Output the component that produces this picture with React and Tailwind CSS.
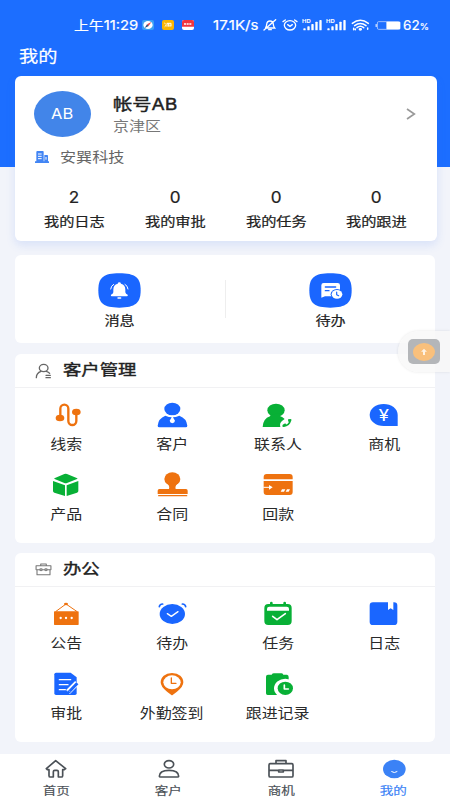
import React from "react";
import clsx from "clsx";

const ORANGE = "#ee720f";
const BLUE = "#1a66ff";
const GREEN = "#08b036";

// Labels use a slightly widened face
const Txt = ({ className, children }) => (
  <span className={clsx("block whitespace-nowrap", className)}>{children}</span>
);

const Glyph = ({ children }) => (
  <svg viewBox="0 0 96 84" className="w-8 h-7" fill="none" strokeLinecap="round" strokeLinejoin="round">
    {children}
  </svg>
);

/* ---------- Customer icons ---------- */

const ClueIcon = () => (
  <Glyph>
    <path d="M31 50V23a12 12 0 0 1 24 0V60a12 12 0 0 0 24 0V33" stroke={ORANGE} strokeWidth="7" />
    <ellipse cx="30" cy="51" rx="13" ry="10" fill={ORANGE} />
    <ellipse cx="79" cy="33" rx="13" ry="10" fill={ORANGE} />
  </Glyph>
);

const CustomerIcon = () => (
  <Glyph>
    <ellipse cx="49" cy="24" rx="24" ry="19" fill={BLUE} />
    <path d="M28 44Q49 53 70 44Q92 52 94 74Q94 79 89 79H10Q5 79 5 74Q7 52 28 44Z" fill={BLUE} />
    <path d="M49 42Q51 51 57 59Q56 66 49 67Q42 66 41 59Q47 51 49 42Z" fill="#fff" />
  </Glyph>
);

const ContactIcon = () => (
  <Glyph>
    <ellipse cx="42" cy="28" rx="26" ry="20" fill={GREEN} />
    <path d="M27 40L24 46Q3 53 2 78H55Q52 66 60 60L68 54Q62 48 54 45V38Z" fill={GREEN} />
    <path d="M64 75Q83 74 85 57" stroke={GREEN} strokeWidth="5" />
    <path d="M62 71L70 67L74 74L65 78Q60 78 62 71ZM79 54L88 55Q90 61 83 64L78 61Z" fill={GREEN} />
  </Glyph>
);

const ChanceIcon = () => (
  <Glyph>
    <path d="M47 9C70 9 89 23 89 42V75H47C24 75 5 61 5 42S24 9 47 9Z" fill={BLUE} />
    <text x="47" y="60" textAnchor="middle" fontSize="50" fill="#fff" fontFamily="Roboto, sans-serif" transform="translate(-7 0) scale(1.15 1)">¥</text>
  </Glyph>
);

const ProductIcon = () => (
  <Glyph>
    <path d="M15 21L43 9Q47 7 51 9L80 21L83 23L51 36Q47 38 43 36L12 23Z" fill={GREEN} />
    <path d="M9 30L45 43V75L13 65Q9 64 9 60ZM85 30L50 43V75L81 65Q85 64 85 60Z" fill={GREEN} />
  </Glyph>
);

const ContractIcon = () => (
  <Glyph>
    <ellipse cx="49" cy="24" rx="24" ry="20" fill={ORANGE} />
    <path d="M33 37Q42 45 39 54H10Q5 54 5 59V69H95V59Q95 54 90 54H59Q56 45 66 37Z" fill={ORANGE} />
    <path d="M8 74H92" stroke={ORANGE} strokeWidth="4" />
  </Glyph>
);

const PaymentIcon = () => (
  <Glyph>
    <path d="M14 9H83Q92 9 92 18V25H5V18Q5 9 14 9ZM5 30H92V63Q92 72 83 72H14Q5 72 5 63Z" fill={ORANGE} />
    <path d="M4 49H28" stroke="#fff" strokeWidth="3" strokeLinecap="butt" />
    <path d="M21 42L32 49L21 56Z" fill="#fff" />
    <path d="M60 55H70L66 62H56ZM75 55H84L80 62H71Z" fill="#fff" />
  </Glyph>
);

/* ---------- Office icons ---------- */

const NoticeIcon = () => (
  <Glyph>
    <path d="M18 34L48 12L80 34" stroke={ORANGE} strokeWidth="3" />
    <ellipse cx="48" cy="12" rx="6" ry="4" fill={ORANGE} />
    <rect x="12" y="34" width="74" height="41" rx="2" fill={ORANGE} />
    <path d="M32 54h.1M48 54h.1M65 54h.1" stroke="#fff" strokeWidth="7" />
  </Glyph>
);

const AlarmIcon = () => (
  <Glyph>
    <ellipse cx="49" cy="42" rx="38" ry="30" fill={BLUE} />
    <path d="M10 20Q11 13 20 12M89 20Q88 13 79 12" stroke={BLUE} strokeWidth="5" />
    <path d="M34 41L46 49L66 35" stroke="#fff" strokeWidth="4" />
  </Glyph>
);

const TaskIcon = () => (
  <Glyph>
    <rect x="7" y="12" width="82" height="63" rx="12" fill={GREEN} />
    <path d="M28 9V15M68 9V15" stroke={GREEN} strokeWidth="8" />
    <path d="M15 32V26Q15 20 22 20H74Q81 20 81 26V32Z" fill="#fff" />
    <path d="M32 49L45 59L70 41" stroke="#fff" strokeWidth="5" />
  </Glyph>
);

const DiaryIcon = () => (
  <Glyph>
    <rect x="5" y="7" width="83" height="68" rx="10" fill={BLUE} />
    <path d="M60 6H76V30L68 25L60 30Z" fill="#fff" />
  </Glyph>
);

const ApproveIcon = () => (
  <Glyph>
    <path d="M18 8H62L80 22V70Q80 75 75 75H18Q13 75 13 70V13Q13 8 18 8Z" fill={BLUE} />
    <path d="M28 29H62M28 44H54M28 59H46" stroke="#fff" strokeWidth="4" />
    <path d="M81 39L54 66" stroke="#fff" strokeWidth="16" strokeLinecap="butt" />
    <path d="M82 40L59 64" stroke={BLUE} strokeWidth="9" strokeLinecap="butt" />
    <path d="M54 60L63 68L50 71Z" fill={BLUE} />
  </Glyph>
);

const CheckInIcon = () => (
  <Glyph>
    <path d="M48 12C68 12 79 23 79 37C79 51 65 59 57 66L48 73L39 66C31 59 17 51 17 37C17 23 28 12 48 12Z" fill={ORANGE} stroke={ORANGE} strokeWidth="6" />
    <ellipse cx="48" cy="37" rx="26" ry="21" fill="#fff" />
    <path d="M46 24V40H60" stroke={ORANGE} strokeWidth="4" />
  </Glyph>
);

const FollowIcon = () => (
  <Glyph>
    <path d="M29 14Q31 10 36 10H58Q62 10 64 14H75Q80 15 80 21V75H17Q12 75 12 70V20Q12 14 18 14Z" fill={GREEN} />
    <ellipse cx="70" cy="55" rx="34" ry="29" fill="#fff" />
    <ellipse cx="70" cy="55" rx="23" ry="20" fill={GREEN} />
    <path d="M67 45V57H79" stroke="#fff" strokeWidth="5" />
  </Glyph>
);

const stats = [
  { label: "我的日志", value: 2 },
  { label: "我的审批", value: 0 },
  { label: "我的任务", value: 0 },
  { label: "我的跟进", value: 0 },
];

const customerItems = [
  { label: "线索", icon: <ClueIcon /> },
  { label: "客户", icon: <CustomerIcon /> },
  { label: "联系人", icon: <ContactIcon /> },
  { label: "商机", icon: <ChanceIcon /> },
  { label: "产品", icon: <ProductIcon /> },
  { label: "合同", icon: <ContractIcon /> },
  { label: "回款", icon: <PaymentIcon /> },
];

const officeItems = [
  { label: "公告", icon: <NoticeIcon /> },
  { label: "待办", icon: <AlarmIcon /> },
  { label: "任务", icon: <TaskIcon /> },
  { label: "日志", icon: <DiaryIcon /> },
  { label: "审批", icon: <ApproveIcon /> },
  { label: "外勤签到", icon: <CheckInIcon /> },
  { label: "跟进记录", icon: <FollowIcon /> },
];

const Signal = () => (
  <svg viewBox="0 0 60 36" className="w-5 h-3 shrink-0" fill="#fff">
    <text x="0" y="12" fontSize="15" fontWeight="700" fontFamily="Inter, sans-serif" textLength="26" lengthAdjust="spacingAndGlyphs">HD</text>
    <rect x="4" y="28" width="7" height="6" rx="2" />
    <rect x="16" y="22" width="7" height="12" rx="2" />
    <rect x="28" y="15" width="7" height="19" rx="2" />
    <rect x="40" y="8" width="7" height="26" rx="2" />
    <rect x="52" y="3" width="7" height="31" rx="2" />
  </svg>
);

const StatusBar = () => (
  <div className="flex items-center h-[50px] pl-[74px] text-white text-[13px] leading-none [-webkit-text-stroke:0.2px]">
    <div className="w-[68px]">
      <Txt className="origin-left scale-x-[1.14]">上午11:29</Txt>
    </div>
    <svg viewBox="0 0 36 30" className="w-3 h-[10px]">
      <rect width="36" height="30" rx="6" fill="#3aa0f5" />
      <ellipse cx="18" cy="15" rx="14" ry="12" fill="#fff" />
      <path d="M28 6L20 18L15 13Z" fill="#e5484d" />
      <path d="M8 24L20 18L15 13Z" fill="#2b4a7c" />
    </svg>
    <svg viewBox="0 0 36 30" className="w-3 h-[10px] ml-2">
      <rect width="36" height="30" rx="6" fill="#fbb604" />
      <path d="M7 9L11 12M8 20L12 16M15 10V20M15 10H27V19M20 10V20M24 14V20" stroke="#fff" strokeWidth="3" fill="none" />
    </svg>
    <svg viewBox="0 0 36 30" className="w-3 h-[10px] ml-2">
      <rect width="36" height="30" rx="6" fill="#fff" />
      <path d="M0 20V6Q0 0 6 0H30Q36 0 36 6V20Z" fill="#f0343f" />
      <path d="M6 12H30" stroke="#fff" strokeWidth="5" strokeDasharray="6 2" />
    </svg>
    <div className="w-[49px] ml-[19px]">
      <Txt className="origin-left scale-x-[1.16]">17.1K/s</Txt>
    </div>
    <svg viewBox="0 0 42 36" className="w-[14px] h-3 ml-px" fill="none" stroke="#fff" strokeWidth="4" strokeLinecap="round">
      <path d="M8 26Q11 22 11 16Q12 6 21 6Q30 6 31 16Q31 22 35 27H8ZM17 32H25M38 2L3 33" />
    </svg>
    <svg viewBox="0 0 48 36" className="w-4 h-3 ml-[5px]" fill="none" stroke="#fff" strokeWidth="4" strokeLinecap="round">
      <ellipse cx="24" cy="19" rx="17" ry="14" />
      <path d="M3 8L10 3M45 8L38 3M17 17L24 22L31 17" />
    </svg>
    <div className="flex gap-1 ml-1">
      <Signal />
      <Signal />
    </div>
    <svg viewBox="0 0 57 36" className="w-[19px] h-3 ml-[5px]" fill="none" stroke="#fff" strokeWidth="4.5" strokeLinecap="round">
      <path d="M4 13Q28 -6 52 13M11 20Q28 7 45 20M18 26Q28 18 38 26" />
      <ellipse cx="28" cy="31" rx="3" ry="2" fill="#fff" />
      <path d="M8 28V32M13 30V32M50 27V31" />
    </svg>
    <svg viewBox="0 0 78 28" className="w-[26px] h-[9px] ml-[5px] shrink-0">
      <rect x="0" y="9" width="5" height="10" rx="2" fill="#b8d0ff" />
      <rect x="6" y="2" width="70" height="24" rx="4" fill="none" stroke="#b8d0ff" strokeWidth="2.5" />
      <rect x="34" y="2" width="43" height="24" rx="3" fill="#fff" />
    </svg>
    <div className="ml-[2px]">
      <Txt className="origin-left scale-x-[1.04]">
        62<span className="text-[9px]">%</span>
      </Txt>
    </div>
  </div>
);

const ProfileCard = () => (
  <section className="ml-[14.5px] mr-[13.5px] mt-[15px] h-[165px] rounded-md bg-white shadow-[0_4px_10px_rgba(60,110,240,0.14)]">
    <div className="flex items-start pt-[15px] pl-[19px] pr-[21px]">
      <div className="w-[57px] h-[46px] rounded-[50%] bg-[#4285e9] flex items-center justify-center text-white text-[15px]">
        <Txt className="scale-x-[1.1]">AB</Txt>
      </div>
      <div className="ml-[22px] flex-1">
        <Txt className="origin-left scale-x-[1.2] text-base leading-[26px] [-webkit-text-stroke:0.4px] text-[#222]">帐号AB</Txt>
        <Txt className="origin-left scale-x-[1.2] text-[13.3px] leading-[18px] text-[#777]">京津区</Txt>
      </div>
      <svg viewBox="0 0 30 36" className="w-[10px] h-3 mt-[17px]" fill="none" stroke="#999" strokeWidth="5">
        <path d="M3 3L25 18L3 33" />
      </svg>
    </div>
    <div className="flex items-center mt-[10px] h-5 pl-5">
      <svg viewBox="0 0 42 36" className="w-[14px] h-3" fill="#4285f4">
        <path d="M4 3Q4 0 7 0H24Q26 0 26 3V32H4ZM28 12H37Q39 12 39 15V32H28ZM0 31H42V36H0Z" />
        <path d="M9 9H20M9 16H20M9 23H20M33 18V26" stroke="#fff" strokeWidth="3" />
      </svg>
      <Txt className="origin-left scale-x-[1.2] ml-[11px] text-[13.4px] text-[#666]">安巽科技</Txt>
    </div>
    <div className="grid grid-cols-4 px-[9.5px] mt-[17px]">
      {stats.map(({ label, value }) => (
        <div key={label} className="flex flex-col items-center text-[#222] [-webkit-text-stroke:0.2px]">
          <Txt className="text-[16.5px] leading-[26px] scale-x-[1.04]">{value}</Txt>
          <Txt className="text-[12.7px] leading-[24px] scale-x-[1.2]">{label}</Txt>
        </div>
      ))}
    </div>
  </section>
);

const Squircle = ({ children }) => (
  <svg viewBox="0 0 129 105" className="w-[43px] h-[35px]" fill="none" strokeLinecap="round" strokeLinejoin="round">
    <path d="M64 1C112 1 128 14 128 52S112 104 64 104S1 91 1 52S17 1 64 1Z" fill={BLUE} />
    {children}
  </svg>
);

const QuickCard = () => (
  <section className="mx-[15px] mt-[14px] h-[88px] rounded-md bg-white flex items-center">
    <button className="flex-1 flex flex-col items-center pt-[5px]">
      <Squircle>
        <path d="M64 28Q68 28 69 32Q82 35 82 50V58Q83 63 89 65Q91 70 86 70H42Q37 70 39 65Q45 63 46 58V50Q46 35 59 32Q60 28 64 28Z" fill="#fff" />
        <path d="M60 75H68" stroke="#fff" strokeWidth="4" />
        <path d="M38 48Q39 38 47 34M90 48Q89 38 81 34" stroke="#fff" strokeWidth="3" />
      </Squircle>
      <Txt className="text-[12.6px] leading-5 mt-[3px] text-[#222] scale-x-[1.2] [-webkit-text-stroke:0.2px]">消息</Txt>
    </button>
    <div className="w-px h-[38px] bg-[#eee]" />
    <button className="flex-1 flex flex-col items-center pt-[5px]">
      <Squircle>
        <path d="M44 30H86Q93 30 93 37V70H48L37 74V37Q37 30 44 30Z" fill="#fff" />
        <path d="M49 42H80M49 53H60" stroke={BLUE} strokeWidth="4" />
        <ellipse cx="84" cy="64" rx="19" ry="16" fill={BLUE} />
        <ellipse cx="84" cy="64" rx="16" ry="13" fill="#fff" />
        <path d="M83 57V65L89 68" stroke={BLUE} strokeWidth="3.5" />
      </Squircle>
      <Txt className="text-[12.6px] leading-5 mt-[3px] text-[#222] scale-x-[1.2] [-webkit-text-stroke:0.2px]">待办</Txt>
    </button>
  </section>
);

const MenuCard = ({ title, icon, items, className }) => (
  <section className={clsx("mx-[15px] h-[189px] rounded-md bg-white", className)}>
    <h2 className="flex items-center h-[34px] pl-[20px] border-b border-[#f1f1f3] text-[15.3px] text-[#222] [-webkit-text-stroke:0.4px]">
      {icon}
      <Txt className="origin-left scale-x-[1.2] ml-[11px]">{title}</Txt>
    </h2>
    <div className="grid grid-cols-4 -mx-[2px] pt-[13px] gap-y-[14px]">
      {items.map(({ label, icon }) => (
        <button key={label} className="flex flex-col items-center h-[56px]">
          {icon}
          <Txt className="text-[13.3px] leading-5 mt-[5px] text-[#2a2a2a] scale-x-[1.2]">{label}</Txt>
        </button>
      ))}
    </div>
  </section>
);

const FloatingButton = () => (
  <div className="absolute right-0 top-[331px] w-[52px] h-[41px] pl-[10px] flex items-center rounded-l-full bg-[#f7f7f8]/80 shadow-[0_0_3px_rgba(0,0,0,0.10)]">
    <div className="w-8 h-[25px] rounded-[5px] bg-[#b4b6b9] flex items-center justify-center">
      <svg viewBox="0 0 66 54" className="w-[22px] h-[18px]">
        <ellipse cx="33" cy="27" rx="33" ry="27" fill="#f9c07c" />
        <path d="M33 17L42 26H36V36H30V26H24Z" fill="#fff" opacity="0.8" />
      </svg>
    </div>
  </div>
);

const tabs = [
  {
    label: "首页",
    icon: <path d="M4 29L32 5L62 29L58 32H53V50Q53 54 49 54H40V38Q40 34 36 34H29Q25 34 25 38V54H16Q12 54 12 50V32H7Z" />,
  },
  {
    label: "客户",
    icon: (
      <>
        <ellipse cx="33" cy="16" rx="14" ry="11" />
        <path d="M4 52Q4 34 33 34T62 52Q62 54 58 54H8Q4 54 4 52Z" />
      </>
    ),
  },
  {
    label: "商机",
    icon: (
      <>
        <rect x="-3" y="14" width="72" height="40" rx="4" />
        <path d="M18 13V5H48V13M-3 34H24M42 34H69M26 33H40V39H26Z" />
      </>
    ),
  },
  { label: "我的", active: true },
];

const TabBar = () => (
  <nav className="h-[46px] bg-white grid grid-cols-4">
    {tabs.map(({ label, icon, active }) => (
      <button key={label} className={clsx("flex flex-col items-center justify-start pt-[5px]", active ? "text-[#3b82f6]" : "text-[#4b5157]")}>
        <svg viewBox="-6 0 78 60" className="w-[26px] h-5" fill="none" stroke="currentColor" strokeWidth="5" strokeLinejoin="round">
          {active ? (
            <>
              <ellipse cx="34" cy="30" rx="34" ry="28" fill="#3b82f6" stroke="none" />
              <path d="M26 38Q34 44 42 38" stroke="#fff" strokeWidth="3" strokeLinecap="round" />
            </>
          ) : icon}
        </svg>
        <Txt className="text-[11.3px] leading-4 mt-[4px] scale-x-[1.2] [-webkit-text-stroke:0.15px]">{label}</Txt>
      </button>
    ))}
  </nav>
);

const App = () => (
  <div
    className="relative w-[450px] h-[800px] overflow-hidden flex flex-col bg-[#f2f4fa]"
    style={{ fontFamily: 'Inter, "Noto Sans CJK SC", sans-serif' }}
  >
    <div className="h-[167px] shrink-0 bg-[#1c6eff]">
      <StatusBar />
      <h1 className="pl-[19px] h-[11px] flex items-center text-base leading-none text-white [-webkit-text-stroke:0.2px]">
        <Txt className="origin-left scale-x-[1.2]">我的</Txt>
      </h1>
      <ProfileCard />
    </div>
    <div className="flex-1 pt-[74px]">
      <QuickCard />
      <MenuCard
        className="mt-[11px]"
        title="客户管理"
        items={customerItems}
        icon={
          <svg viewBox="0 0 51 48" className="w-[17px] h-4 shrink-0" fill="none" stroke="#666" strokeWidth="4" strokeLinecap="round">
            <ellipse cx="26" cy="15" rx="13" ry="11" />
            <path d="M4 44Q4 30 18 25M34 25Q41 27 44 31M33 37H46M33 44H46" />
          </svg>
        }
      />
      <MenuCard
        className="mt-[10px]"
        title="办公"
        items={officeItems}
        icon={
          <svg viewBox="0 0 54 42" className="w-[17px] h-[13px] shrink-0" fill="none" stroke="#777" strokeWidth="3.5" strokeLinejoin="round">
            <path d="M3 9H51V21L48 23V38H6V23L3 21ZM18 8V3H36V8M6 22H15M23 22H31M39 22H48" />
            <ellipse cx="19" cy="22" rx="4" ry="3" />
            <ellipse cx="35" cy="22" rx="4" ry="3" />
          </svg>
        }
      />
    </div>
    <TabBar />
    <FloatingButton />
  </div>
);

export default App;
